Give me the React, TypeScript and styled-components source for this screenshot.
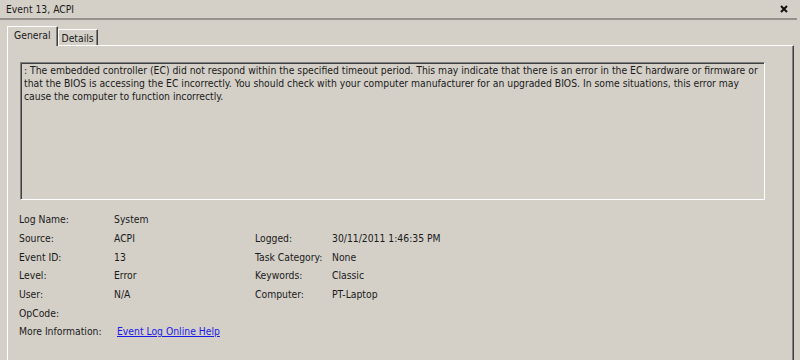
import React from "react";
import styled, { createGlobalStyle } from "styled-components";

const Global = createGlobalStyle`
  html, body { margin: 0; padding: 0; background: #d4d0c8; }
  body {
    font-family: "DejaVu Sans Condensed", "DejaVu Sans", "Liberation Sans", sans-serif;
    font-size: 10.3px;
    color: #1a1a1a;
  }
`;

const Window = styled.div`
  width: 800px;
  height: 360px;
  overflow: hidden;
  display: flex;
  flex-direction: column;
  background: #d4d0c8;
`;

const TitleBar = styled.div`
  height: 18px;
  display: flex;
  align-items: center;
  justify-content: space-between;
  padding: 0 9px 0 6px;
  border-bottom: 2px solid #94918a;
  margin-right: 3px;
`;

const Title = styled.span`
  font-size: 10.3px;
`;

const Body = styled.div`
  flex: 1;
  display: flex;
  flex-direction: column;
  padding: 7px 6px 0 7px;
`;

const TabStrip = styled.div`
  display: flex;
  align-items: flex-end;
  height: 19px;
  padding-left: 1px;
  position: relative;
  z-index: 1;
  margin-bottom: -1px;
`;

const Tab = styled.div<{ $active?: boolean }>`
  box-sizing: border-box;
  height: ${(p) => (p.$active ? "20px" : "16px")};
  padding: ${(p) => (p.$active ? "2px 6px 0 6px" : "2px 3px 0 3px")};
  border-top: 1px solid #ffffff;
  border-left: 1px solid #ffffff;
  border-right: 1px solid #404040;
  box-shadow: inset -1px 0 0 #808080;
  background: #d4d0c8;
  ${(p) => (p.$active ? "margin-left: -1px;" : "margin-bottom: 1px;")}
`;

const Panel = styled.div`
  flex: 1;
  border-top: 1px solid #ffffff;
  border-left: 1px solid #ffffff;
  border-right: 1px solid #404040;
  box-shadow: inset -1px 0 0 #808080;
  display: flex;
  flex-direction: column;
  padding: 16px 0 0 11px;
`;

const MessageBox = styled.div`
  margin-left: 1px;
  width: 745px;
  height: 138px;
  box-sizing: border-box;
  border-top: 1px solid #808080;
  border-left: 1px solid #808080;
  border-bottom: 1px solid #ffffff;
  border-right: 1px solid #ffffff;
  box-shadow: inset 1px 1px 0 #404040;
  padding: 1px 2px 2px 3px;
  line-height: 13px;
`;

const InfoGrid = styled.div`
  margin-top: 10px;
  display: grid;
  grid-template-columns: 95px 141px 77px auto;
  grid-auto-rows: 18.67px;
  align-items: center;
`;

const Label = styled.span``;
const Value = styled.span``;

const Link = styled.a`
  color: #1a1ae6;
  text-decoration: underline;
  margin-left: 3px;
  grid-column: 2 / span 3;
  cursor: pointer;
`;

const CloseBtn = styled.span`
  display: flex;
  align-items: center;
`;

const rows: [string, string, string?, string?][] = [
  ["Log Name:", "System"],
  ["Source:", "ACPI", "Logged:", "30/11/2011 1:46:35 PM"],
  ["Event ID:", "13", "Task Category:", "None"],
  ["Level:", "Error", "Keywords:", "Classic"],
  ["User:", "N/A", "Computer:", "PT-Laptop"],
  ["OpCode:", ""],
];

export default function App() {
  return (
    <Window>
      <Global />
      <TitleBar>
        <Title>Event 13, ACPI</Title>
        <CloseBtn>
          <svg width="8" height="8" viewBox="0 0 8 8">
            <path d="M1 1 L7 7 M7 1 L1 7" stroke="#111" strokeWidth="2" />
          </svg>
        </CloseBtn>
      </TitleBar>
      <Body>
        <TabStrip>
          <Tab $active>General</Tab>
          <Tab>Details</Tab>
        </TabStrip>
        <Panel>
          <MessageBox>
            : The embedded controller (EC) did not respond within the specified timeout period. This may
            indicate that there is an error in the EC hardware or firmware or that the BIOS is accessing the
            EC incorrectly. You should check with your computer manufacturer for an upgraded BIOS. In some
            situations, this error may cause the computer to function incorrectly.
          </MessageBox>
          <InfoGrid>
            {rows.map((r, i) => (
              <React.Fragment key={i}>
                <Label>{r[0]}</Label>
                <Value>{r[1]}</Value>
                <Label>{r[2] ?? ""}</Label>
                <Value>{r[3] ?? ""}</Value>
              </React.Fragment>
            ))}
            <Label>More Information:</Label>
            <Link>Event Log Online Help</Link>
          </InfoGrid>
        </Panel>
      </Body>
    </Window>
  );
}
